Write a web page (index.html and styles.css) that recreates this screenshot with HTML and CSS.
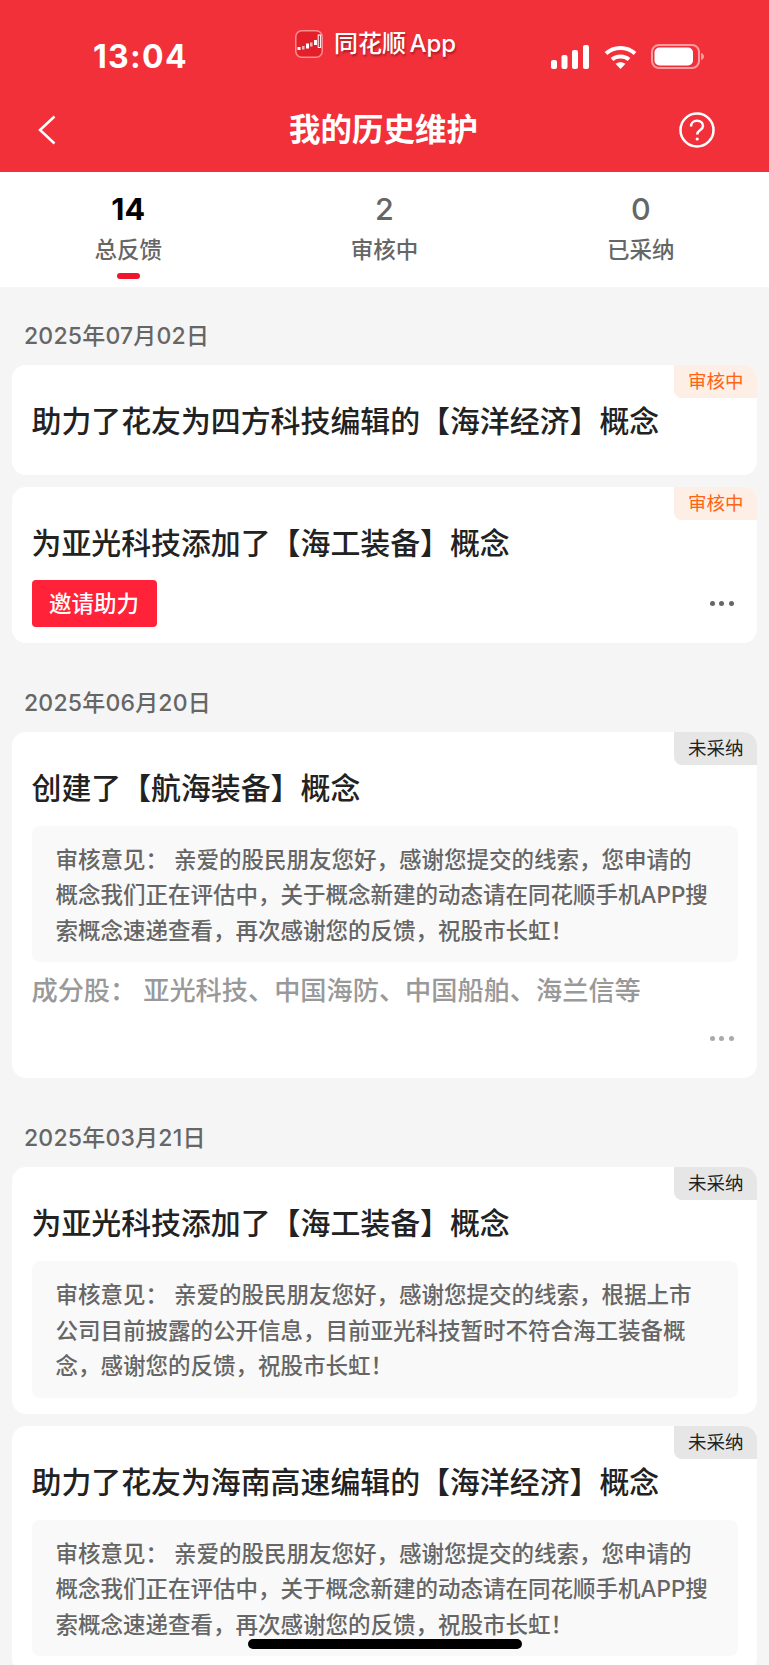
FILE: index.html
```html
<!DOCTYPE html>
<html lang="zh-CN">
<head>
<meta charset="utf-8">
<title>我的历史维护</title>
<link rel="stylesheet" href="styles.css">
</head>
<body>
<div class="screen">
  <header class="header">
    <div class="status">
      <span class="time">13:04</span>
      <div class="app">
        <svg class="app-icon" width="28" height="28" viewBox="0 0 28 28">
          <rect x="0.75" y="0.75" width="26.5" height="26.5" rx="6" fill="#e3202a" stroke="#f98d90" stroke-width="1.5"/>
          <g fill="#fff">
            <rect x="2.500" y="17" width="3" height="3"/>
            <rect x="7" y="16" width="2.500" height="3.500" fill="#f6b9bb"/>
            <rect x="11" y="13.500" width="3" height="5"/>
            <rect x="15" y="12.500" width="2.500" height="4" fill="#f6b9bb"/>
            <rect x="19" y="10" width="3" height="5"/>
            <rect x="23.200" y="5" width="2.400" height="12.500" fill="none" stroke="#fff" stroke-width="1"/>
          </g>
        </svg>
        <span class="app-name">同花顺 App</span>
      </div>
      <div class="sys">
        <svg width="38" height="24" viewBox="0 0 38 24" fill="#fff">
          <rect x="0" y="15" width="6" height="9" rx="2"/>
          <rect x="10.5" y="10" width="6" height="14" rx="2"/>
          <rect x="21" y="5" width="6" height="19" rx="2"/>
          <rect x="32" y="0" width="6" height="24" rx="2"/>
        </svg>
        <svg width="33" height="24" viewBox="0 0 33 24" fill="none" stroke="#fff" stroke-width="4">
          <path d="M2 8.5C10 1 23 1 31 8.5"/>
          <path d="M8 14.5C12.500 10.500 20.500 10.500 25 14.500"/>
          <path d="M16.500 24L11.500 18.800C14.500 16.600 18.500 16.600 21.500 18.800Z" fill="#fff" stroke="none"/>
        </svg>
        <svg width="53" height="25" viewBox="0 0 53 25">
          <rect x="1" y="1" width="47" height="23" rx="7" fill="none" stroke="#fa9ca0" stroke-width="2"/>
          <rect x="3.500" y="3.500" width="38.500" height="18" rx="5" fill="#fff"/>
          <path d="M50 9C52 9.500 53 11 53 12.500S52 15.500 50 16Z" fill="#fa9ca0"/>
        </svg>
      </div>
    </div>
    <nav class="nav">
      <svg class="nav-back" width="18" height="30" viewBox="0 0 18 30" fill="none" stroke="#fff" stroke-width="2.500">
        <path d="M16.500 1.500L2 15L16.500 28.500"/>
      </svg>
      <h1 class="nav-title">我的历史维护</h1>
      <svg class="nav-help" width="36" height="36" viewBox="0 0 36 36" fill="none" stroke="#fff" stroke-width="2.500">
        <circle cx="18" cy="18" r="16.500"/>
        <path d="M12 14.500C12 11 14.500 8.800 18 8.800S24 11 24 14C24 18 18.200 18 18.200 22.500"/>
        <circle cx="18.200" cy="27" r="1.600" fill="#fff" stroke="none"/>
      </svg>
    </nav>
  </header>

  <section class="tabs">
    <div class="tab tab-active">
      <span class="tab-num">14</span>
      <span class="tab-label">总反馈</span>
      <span class="tab-bar"></span>
    </div>
    <div class="tab">
      <span class="tab-num">2</span>
      <span class="tab-label">审核中</span>
      <span class="tab-bar"></span>
    </div>
    <div class="tab">
      <span class="tab-num">0</span>
      <span class="tab-label">已采纳</span>
      <span class="tab-bar"></span>
    </div>
  </section>

  <main class="list">
    <section class="group">
      <h2 class="date">2025年07月02日</h2>
      <article class="card card-short">
        <span class="tag tag-pending">审核中</span>
        <h3 class="card-title">助力了花友为四方科技编辑的【海洋经济】概念</h3>
      </article>
      <article class="card">
        <span class="tag tag-pending">审核中</span>
        <h3 class="card-title">为亚光科技添加了【海工装备】概念</h3>
        <div class="actions">
          <button class="invite">邀请助力</button>
          <span class="dots"><i></i><i></i><i></i></span>
        </div>
      </article>
    </section>

    <section class="group">
      <h2 class="date">2025年06月20日</h2>
      <article class="card">
        <span class="tag tag-rejected">未采纳</span>
        <h3 class="card-title">创建了【航海装备】概念</h3>
        <p class="review">审核意见： 亲爱的股民朋友您好，感谢您提交的线索，您申请的概念我们正在评估中，关于概念新建的动态请在同花顺手机APP搜索概念速递查看，再次感谢您的反馈，祝股市长虹！</p>
        <p class="stocks">成分股： 亚光科技、中国海防、中国船舶、海兰信等</p>
        <div class="actions actions-end">
          <span class="dots dots-light"><i></i><i></i><i></i></span>
        </div>
      </article>
    </section>

    <section class="group">
      <h2 class="date">2025年03月21日</h2>
      <article class="card">
        <span class="tag tag-rejected">未采纳</span>
        <h3 class="card-title">为亚光科技添加了【海工装备】概念</h3>
        <p class="review review-last">审核意见： 亲爱的股民朋友您好，感谢您提交的线索，根据上市公司目前披露的公开信息，目前亚光科技暂时不符合海工装备概念，感谢您的反馈，祝股市长虹！</p>
      </article>
      <article class="card">
        <span class="tag tag-rejected">未采纳</span>
        <h3 class="card-title">助力了花友为海南高速编辑的【海洋经济】概念</h3>
        <p class="review review-last">审核意见： 亲爱的股民朋友您好，感谢您提交的线索，您申请的概念我们正在评估中，关于概念新建的动态请在同花顺手机APP搜索概念速递查看，再次感谢您的反馈，祝股市长虹！</p>
      </article>
    </section>
  </main>
  <div class="home-bar"></div>
</div>
</body>
</html>
```

FILE: styles.css
```css
* { box-sizing: border-box; }
html, body { margin: 0; padding: 0; }
body {
  background: #f5f5f5;
  font-family: Inter, "Noto Sans CJK SC", sans-serif;
}
.screen {
  position: relative;
  width: 769px;
  height: 1665px;
  overflow: hidden;
  background: #f5f5f5;
}
.header {
  height: 172px;
  background: #f2303a;
  color: #fff;
}
.status {
  display: flex;
  align-items: flex-start;
  height: 106px;
  padding: 0 65px 0 93px;
}
.time {
  margin-top: 39px;
  width: 95px;
  font-size: 32px;
  line-height: 36px;
  font-weight: 700;
  letter-spacing: 1.300px;
}
.app {
  display: flex;
  align-items: center;
  gap: 11px;
  margin: 30px 0 0 107px;
}
.app-name {
  font-size: 24px;
  line-height: 28px;
  font-weight: 500;
  word-spacing: -3px;
  text-shadow: 1px 2px 2px rgba(90, 0, 0, .45);
}
.sys {
  display: flex;
  align-items: center;
  gap: 14.500px;
  margin: 44px 0 0 auto;
}
.nav {
  display: grid;
  grid-template-columns: 1fr auto 1fr;
  align-items: center;
  height: 46px;
  padding: 0 54px 0 52px;
}
.nav-back { margin-left: -14px; }
.nav-help { justify-self: end; }
.nav-title {
  margin: 1px 0 0;
  font-size: 31.500px;
  line-height: 46px;
  font-weight: 700;
}
.tabs {
  display: grid;
  grid-template-columns: repeat(3, 1fr);
  height: 115px;
  background: #fff;
}
.tab {
  display: flex;
  flex-direction: column;
  align-items: center;
  padding-top: 19px;
  color: #666;
}
.tab-num {
  font-size: 30.500px;
  line-height: 36px;
  font-weight: 500;
}
.tab-label {
  margin-top: 8px;
  font-size: 22.500px;
  line-height: 30px;
  font-weight: 500;
}
.tab-bar {
  width: 23px;
  height: 6px;
  margin-top: 8px;
  border-radius: 3px;
}
.tab-active .tab-num { color: #000; font-weight: 700; }
.tab-active .tab-bar { background: #f0142d; }
.list {
  padding: 34px 12px 0;
}
.group {
  margin-bottom: 45px;
}
.date {
  margin: 0 12px 14px;
  font-size: 23px;
  line-height: 30px;
  font-weight: 500;
  letter-spacing: .2px;
  color: #666;
}
.card {
  position: relative;
  margin-bottom: 12px;
  padding: 36px 19.500px 0;
  background: #fff;
  border-radius: 14px;
  overflow: hidden;
}
.group .card:last-child { margin-bottom: 0; }
.card-short { height: 110px; }
.tag {
  position: absolute;
  top: 0;
  right: 0;
  height: 33px;
  padding: 0 13.500px;
  font-size: 18.500px;
  line-height: 33px;
  font-weight: 400;
  border-bottom-left-radius: 8px;
}
.tag-pending { background: #fdeee6; color: #ff6314; }
.tag-rejected { background: #e6e6e6; color: #222; }
.card-title {
  margin: 0;
  font-size: 29.900px;
  line-height: 40px;
  font-weight: 500;
  color: #222;
}
.actions {
  display: flex;
  align-items: center;
  justify-content: space-between;
  height: 47px;
  margin: 17px 0 16px;
}
.actions-end {
  justify-content: flex-end;
  margin: 4px 0 16px;
}
.invite {
  width: 125px;
  height: 47px;
  padding: 0;
  border: 0;
  border-radius: 4px;
  background: #ff2238;
  color: #fff;
  font: 500 22.500px/47px Inter, "Noto Sans CJK SC", sans-serif;
}
.dots {
  display: flex;
  gap: 4.500px;
  margin-right: 4px;
}
.dots i {
  width: 5px;
  height: 5px;
  border-radius: 50%;
  background: #666;
}
.dots-light i { background: #aaa; }
.review {
  margin: 18px 0 0;
  padding: 16px 24px 14.600px;
  background: #f9f9f9;
  border-radius: 8px;
  font-size: 22.500px;
  line-height: 35.300px;
  font-weight: 500;
  color: #666;
}
.review-last { margin-bottom: 16px; }
.stocks {
  margin: 9px 0 0;
  font-size: 26.200px;
  line-height: 40px;
  font-weight: 500;
  color: #999;
}
.home-bar {
  position: absolute;
  left: 248px;
  top: 1639px;
  width: 274px;
  height: 10px;
  border-radius: 5px;
  background: #000;
}
```
